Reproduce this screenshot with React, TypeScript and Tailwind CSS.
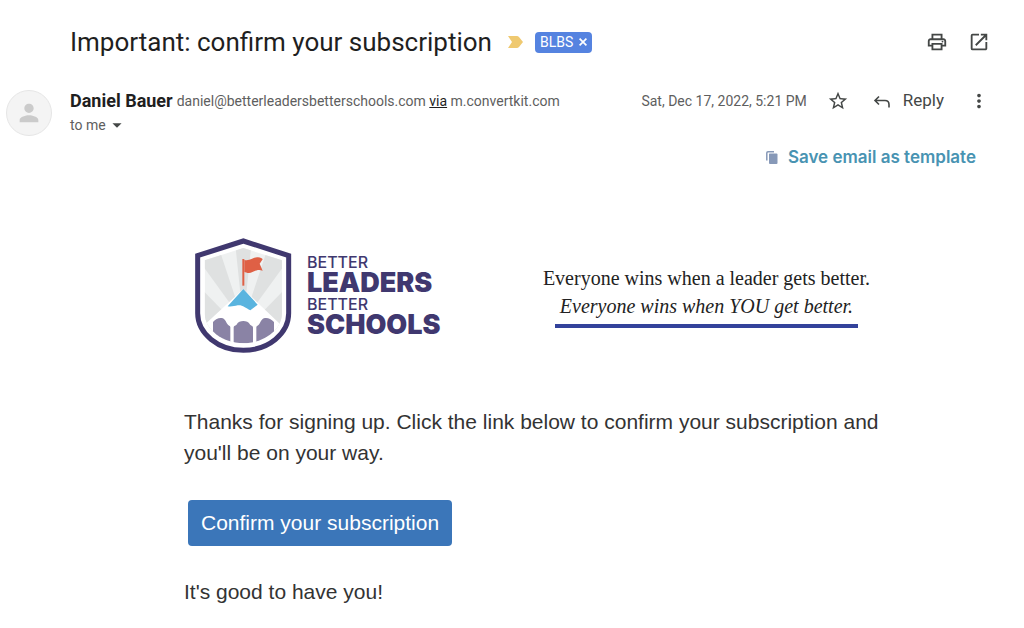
import { MdArrowDropDown, MdMoreVert, MdOpenInNew, MdOutlinePrint, MdPerson, MdStarBorder } from "react-icons/md";

const iconButton = "flex items-center justify-center text-[#444746] cursor-pointer";

function Shield() {
  return (
    <svg viewBox="39 39 294 345" className="w-[98px] h-[115px] shrink-0" aria-hidden="true">
      <defs>
        <clipPath id="shield-inner">
          <path d="M187 69 L303 106 V265 C303 313 250 355 187 355 C124 355 71 313 71 265 V106 Z" />
        </clipPath>
      </defs>
      <path
        d="M187 48 L323 92 V265 C323 326 262 376 187 376 C112 376 50 326 50 265 V92 Z"
        fill="#fff"
        stroke="#40386f"
        strokeWidth="15"
      />
      <g clipPath="url(#shield-inner)">
        <rect x="60" y="60" width="260" height="300" fill="#eff1f1" />
        <g fill="#dfe1e1">
          <path d="M187 290 L163 60 H211 Z" />
          <path d="M187 290 L109 55 L60 60 V115 Z" />
          <path d="M187 290 L265 55 L314 60 V115 Z" />
          <path d="M187 320 L60 190 V320 Z" />
          <path d="M187 320 L314 190 V320 Z" />
        </g>
        <path d="M187 192 L300 300 V360 H70 V300 Z" fill="#fff" />
        <g fill="#8a83a5">
          <path d="M148 360 H70 L96 318 V291 C104 281 113 278 122 279 C132 281 134 289 139 297 C142 302 148 302 148 307 Z" />
          <path d="M158 360 V308 C158 301 165 303 168 297 C173 285 201 285 206 297 C209 303 216 301 216 308 V360 Z" />
          <path d="M226 360 H304 L279 318 V291 C270 281 261 278 252 279 C242 281 240 289 235 297 C232 302 226 302 226 307 Z" />
        </g>
      </g>
      <path d="M187 192 L230 239 L208 256 C193 248 184 239 170 241 C160 243 151 246 140 244 Z" fill="#59b4df" />
      <path d="M184 102 H190 V182 H184 Z" fill="#df6045" />
      <path d="M190 105 C207 110 217 95 231 97 C239 97 243 100 245 103 L236 116 L245 137 C226 130 216 144 204 144 C198 144 193 142 190 141 Z" fill="#df6045" />
    </svg>
  );
}

function Logo() {
  return (
    <div className="flex items-center gap-[15px]">
      <Shield />
      <div className="flex flex-col font-['Inter',sans-serif] text-[#40386f]">
        <span className="text-base leading-4 font-medium">BETTER</span>
        <span className="text-[27px] leading-[26px] font-black">LEADERS</span>
        <span className="text-base leading-4 font-medium">BETTER</span>
        <span className="text-[27px] leading-[26px] font-black">SCHOOLS</span>
      </div>
    </div>
  );
}

function SubjectBar() {
  return (
    <div className="flex items-center justify-between">
      <div className="flex items-center">
        <h1 className="text-[26px] leading-9 text-[#1f1f1f]">Important: confirm your subscription</h1>
        <svg viewBox="0 0 15 12" className="ml-4 w-[15px] h-3" aria-hidden="true">
          <path d="M0 0 H9 Q10 0 11 1 L15 6 L11 11 Q10 12 9 12 H0 L4 6 Z" fill="#efc970" />
        </svg>
        <span className="ml-3 flex h-[21px] items-center gap-[6px] rounded bg-[#5583e0] px-[5px] text-sm text-white">
          BLBS
          <button type="button" aria-label="Remove label" className="cursor-pointer">
            <svg viewBox="0 0 8 8" className="size-2" fill="none" stroke="currentColor" strokeWidth="1.7" aria-hidden="true">
              <path d="M0.6 0.6 L7.4 7.4 M7.4 0.6 L0.6 7.4" />
            </svg>
          </button>
        </span>
      </div>
      <div className="flex gap-5">
        <button type="button" aria-label="Print" className={iconButton}>
          <MdOutlinePrint size={22} />
        </button>
        <button type="button" aria-label="Open in new window" className={iconButton}>
          <MdOpenInNew size={22} />
        </button>
      </div>
    </div>
  );
}

function MessageHeader() {
  return (
    <div className="flex gap-[18px]">
      <div className="flex size-[46px] shrink-0 items-center justify-center rounded-full border border-[#e6e6e6] bg-[#f4f4f4]">
        <MdPerson size={28} color="#cbcbcb" />
      </div>
      <div className="flex grow justify-between">
        <div>
          <div className="flex h-[22px] items-center gap-1 text-sm leading-[22px] text-[#5e5e5e]">
            <span className="text-lg leading-[22px] font-bold text-[#1f1f1f]">Daniel Bauer</span>
            <span>
              daniel@betterleadersbetterschools.com <a href="#via" className="text-[#1f1f1f] underline">via</a> m.convertkit.com
            </span>
          </div>
          <button type="button" className="mt-px flex h-6 items-center text-sm text-[#5e5e5e] cursor-pointer">
            to me
            <MdArrowDropDown size={22} className="text-[#444746]" />
          </button>
        </div>
        <div className="flex h-[22px] items-center text-[#444746]">
          <span className="text-sm text-[#5e5e5e]">Sat, Dec 17, 2022, 5:21 PM</span>
          <button type="button" aria-label="Star" className={`${iconButton} ml-5`}>
            <MdStarBorder size={22} />
          </button>
          <button type="button" className="ml-6 flex items-center gap-3 text-[17px] cursor-pointer">
            <svg viewBox="0 0 18 16" className="w-[18px] h-4" fill="none" stroke="currentColor" strokeWidth="1.6" aria-hidden="true">
              <path d="M6 3.5 L2 7.5 L6 11.5 M2 7.5 H12 Q16 7.5 16 11.5 V14.5" />
            </svg>
            Reply
          </button>
          <button type="button" aria-label="More" className={`${iconButton} ml-6`}>
            <MdMoreVert size={22} />
          </button>
        </div>
      </div>
    </div>
  );
}

export default function App() {
  return (
    <div className="min-h-screen bg-white font-['Roboto',sans-serif]">
      <header className="pl-[6px] pr-[34px] pt-6">
        <div className="pl-16">
          <SubjectBar />
        </div>
        <div className="mt-[30px]">
          <MessageHeader />
        </div>
      </header>
      <div className="mt-2 flex justify-end pr-12">
        <button type="button" className="flex items-center gap-[10px] font-['Inter',sans-serif] text-[17px] leading-6 font-semibold text-[#4893b2] cursor-pointer">
          <svg viewBox="0 0 12 13" className="w-3 h-[13px]" aria-hidden="true">
            <path d="M0.8 9.5 V2 Q0.8 0.8 2 0.8 H8" fill="none" stroke="#8799b8" strokeWidth="1.5" />
            <path d="M3.5 2.5 H10.5 Q11.5 2.5 11.5 3.5 V12 Q11.5 13 10.5 13 H4 Q3 13 3 12 V3 Z" fill="#8799b8" />
          </svg>
          Save email as template
        </button>
      </div>
      <main className="mx-auto mt-[69px] w-full max-w-[740px] pl-[42px] font-['Liberation_Sans',sans-serif] text-[21px] leading-[31px] text-[#333]">
        <div className="flex items-center justify-between pl-[10px] pr-3">
          <Logo />
          <div className="flex flex-col items-center font-['Liberation_Serif',serif] text-xl leading-7 text-[#222]">
            <p>Everyone wins when a leader gets better.</p>
            <p className="italic">Everyone wins when YOU get better.</p>
            <hr className="mt-1 w-[303px] border-0 border-t-4 border-[#33429b]" />
          </div>
        </div>
        <p className="mt-[53px]">
          Thanks for signing up. Click the link below to confirm your subscription and you'll be on your way.
        </p>
        <a href="#confirm" className="ml-1 mt-8 inline-block rounded bg-[#3b76b9] px-[13px] py-2 leading-[30px] text-white">
          Confirm your subscription
        </a>
        <p className="mt-[30px]">It's good to have you!</p>
      </main>
    </div>
  );
}
